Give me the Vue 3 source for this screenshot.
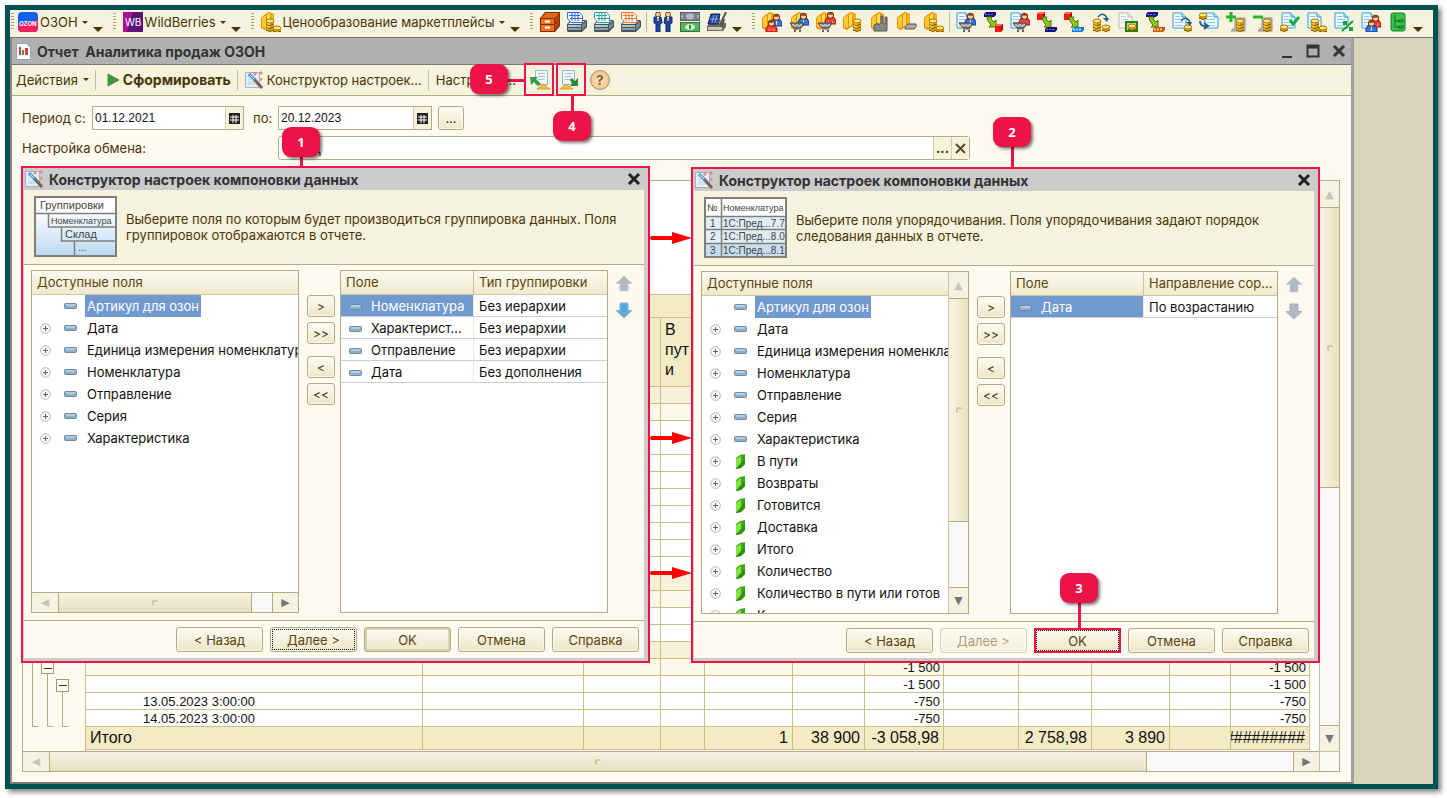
<template>
  <div class="page">
    <!-- shared icon parts -->
    <svg class="defs" width="0" height="0" aria-hidden="true">
      <symbol id="folder" viewBox="0 0 14 18" width="14" height="18" overflow="visible">
        <path d="M0 6 3 3 8 0l5 2v12l-5 1-4 3-4-2z" fill="#f09000" />
        <path d="M1 6l4-3v13l-4-1z" fill="#ffc93c" />
        <path d="M6 3l3-2v12l-3 2z" fill="#ffe04a" />
        <path d="M10 2l3 1v10l-3 1z" fill="#f7b020" />
      </symbol>
      <symbol id="coins" viewBox="0 0 8 12" width="8" height="12" overflow="visible">
        <path d="M0 2h8v10H0z" fill="#e0a800" />
        <ellipse cx="4" cy="2" rx="4" ry="2" fill="#ffe97a" stroke="#a87400" />
        <path d="M0 5q4 3 8 0M0 8q4 3 8 0M0 11q4 3 8 0" stroke="#7a5000" fill="none" />
        <path d="M1 5h3M1 8h3" stroke="#ffe97a" />
      </symbol>
      <symbol id="coins-low" viewBox="0 0 8 6" width="8" height="6" overflow="visible">
        <path d="M0 2h8v4H0z" fill="#e0a800" />
        <ellipse cx="4" cy="2" rx="4" ry="2" fill="#ffe97a" stroke="#a87400" />
        <path d="M0 5q4 3 8 0" stroke="#7a5000" fill="none" />
      </symbol>
      <symbol id="man-red" viewBox="0 0 10 11" width="11" height="12" overflow="visible">
        <path d="M0 11V8l2-3h6l2 3v3z" fill="#f4433c" stroke="#b01414" />
        <path d="M3 8v2M7 8v2" stroke="#ff9a90" />
        <circle cx="5" cy="3" r="2.800" fill="#ffcf9e" stroke="#7a3010" />
        <path d="M2 2.500q3-5 6 0z" fill="#98401a" />
      </symbol>
      <symbol id="man-blue" viewBox="0 0 10 11" width="11" height="12" overflow="visible">
        <path d="M0 11V8l2-3h6l2 3v3z" fill="#3478e8" stroke="#103c98" />
        <path d="M5 6v4" stroke="#cfe2ff" />
        <circle cx="5" cy="3" r="2.800" fill="#ffcf9e" stroke="#7a3010" />
        <path d="M2 2.500q3-5 6 0z" fill="#98401a" />
      </symbol>
      <symbol id="basket" viewBox="0 0 14 9" width="14" height="9" overflow="visible">
        <path d="M0 0h14l-3 5H4z" fill="#888" stroke="#444" />
        <path d="M3 1v2M5 2v2M7 1v2M9 2v2M11 1v2" stroke="#eee" />
        <path d="M4 6h7" stroke="#555" />
        <circle cx="5" cy="8" r="1" fill="#333" /><circle cx="10" cy="8" r="1" fill="#333" />
      </symbol>
      <symbol id="doc" viewBox="0 0 15 16" width="15" height="16" overflow="visible">
        <path d="M1 1h9l4 4v11H1z" fill="#f4fbff" stroke="#2a9be0" />
        <path d="M10 1v4h4" fill="#bfe4fa" stroke="#2a9be0" />
        <path d="M3 4.500h5M3 7.500h8M3 10.500h8M3 13.500h8" stroke="#8cc8ee" />
      </symbol>
      <symbol id="doc-grey" viewBox="0 0 15 16" width="15" height="16" overflow="visible">
        <path d="M1 1h9l4 4v11H1z" fill="#fbfbfb" stroke="#b8b8b8" />
        <path d="M10 1v4h4" fill="#e8e8e8" stroke="#b8b8b8" />
        <path d="M3 4.500h5M3 7.500h8M3 10.500h8" stroke="#d0d0d0" />
      </symbol>
      <symbol id="cube-red" viewBox="0 0 8 8" width="8" height="8" overflow="visible">
        <path d="M0 2l2-2h6v6L6 8H0z" fill="#b80808" />
        <path d="M0 2h6v6H0z" fill="#f01818" />
        <path d="M0 2l2-2h6L6 2z" fill="#ff6a5a" />
      </symbol>
      <symbol id="bar-navy" viewBox="0 0 12 5" width="12" height="5" overflow="visible">
        <path d="M0 2l2-2h10v3l-2 2H0z" fill="#14147c" /><path d="M1 2.500h9" stroke="#7a6cf0" stroke-dasharray="2 1" />
      </symbol>
      <symbol id="bar-blue" viewBox="0 0 12 5" width="12" height="5" overflow="visible">
        <path d="M0 2l2-2h10v3l-2 2H0z" fill="#1878e0" /><path d="M1 2.500h9" stroke="#a8dcff" stroke-width="2" stroke-dasharray="2 1" />
      </symbol>
      <symbol id="bar-orange" viewBox="0 0 12 5" width="12" height="5" overflow="visible">
        <path d="M0 2l2-2h10v3l-2 2H0z" fill="#c85818" /><path d="M1 2.500h9" stroke="#ffc890" stroke-width="2" stroke-dasharray="2 1" />
      </symbol>
      <symbol id="arrow" viewBox="0 0 10 10" width="10" height="10" overflow="visible">
        <path d="M0 0h5l-1 2 3 3 2-2v7H2l2-2-3-4z" fill="#8fc41c" stroke="#4a7800" />
      </symbol>
      <symbol id="printer" viewBox="0 0 20 20" width="20" height="20">
        <path d="M0 12l4-4h15l1 1v6l-5 5H1l-1-1z" fill="#4a545c" />
        <path d="M1 12l4-3h13l-4 3z" fill="#e2e8ec" />
        <path d="M1 13h13v2H1z" fill="#b8c4cc" /><path d="M1 16h13v2H1z" fill="#8c9aa4" />
        <path d="M15 13l4-3v4l-4 4z" fill="#78868f" /><path d="M10 14h3" stroke="#58e058" />
      </symbol>
      <symbol id="curve" viewBox="0 0 12 8" width="12" height="8" overflow="visible">
        <path d="M1 4q5-6 9 1" fill="none" stroke="#2a5c8c" stroke-width="1.500" />
        <path d="M6 5h6l-2 4z" fill="#2a5c8c" />
      </symbol>
      <symbol id="plate" viewBox="0 0 14 13" width="14" height="13" overflow="visible">
        <path d="M0 13l4-4V0h10v13z" fill="#b8b8b8" stroke="#909090" />
      </symbol>
      <symbol id="wand" viewBox="0 0 19 18" width="19" height="18" overflow="visible">
        <path d="M.5 1.500h14v15H.5z" fill="#e6eff7" stroke="#9db4c6" />
        <path d="M3 5h5M3 8h9M3 11h9M3 13h9" stroke="#b8cedd" />
        <path d="M9 8 17 17" stroke="#7a6048" stroke-width="3" />
        <path d="M4 3l6 6" stroke="#4a92cc" stroke-width="3" />
        <path d="M5 4l4 4" stroke="#d8ecfa" />
        <path d="M10 1v4M8 3h4M16 0v4M14 2h4M16 7v3M15 8h3" stroke="#f5766a" />
      </symbol>
      <symbol id="dash" viewBox="0 0 13 6" width="13" height="6">
        <rect x=".5" y=".5" width="12" height="5" rx="1" fill="#8db0c8" stroke="#6c8da5" />
        <path d="M2 2h9" stroke="#d6e6f0" />
      </symbol>
      <symbol id="leaf" viewBox="0 0 9 15" width="9" height="15">
        <path d="M0 4 4 1l5-1v10l-4 4-5 1z" fill="#3aa814" />
        <path d="M0 5 5 2v8l-5 4z" fill="#86e048" />
        <path d="M4 10l5-5v5l-4 4-5 1z" fill="#2c9010" />
      </symbol>
      <symbol id="plus-ball" viewBox="0 0 11 11" width="11" height="11">
        <circle cx="5.500" cy="5.500" r="4.800" fill="#fafafa" stroke="#b4b4b4" />
        <path d="M3 5.500h5M5.500 3v5" stroke="#666" />
      </symbol>
      <symbol id="up" viewBox="0 0 18 17" width="18" height="17">
        <path d="M9 1l8 7.500h-4V16H5V8.500H1z" fill="#b0bac2" stroke="#c6ced4" />
      </symbol>
      <symbol id="down" viewBox="0 0 18 17" width="18" height="17">
        <path d="M9 16l8-7.500h-4V1H5v7.500H1z" fill="currentColor" stroke="#9db0bd" />
      </symbol>
    </svg>

    <div class="frame">
      <nav class="mainbar" aria-label="Панель команд">
        <i class="grip"></i>
        <button class="menu">
          <svg width="20" height="20" viewBox="0 0 20 20">
            <rect width="20" height="20" rx="4" fill="#1262f0" />
            <path d="M0 13 20 8v8q0 4-4 4H4q-4 0-4-4z" fill="#f5205a" />
            <text x="1" y="14" font-size="6" font-weight="bold" fill="#fff">OZON</text>
          </svg>
          ОЗОН<b class="caret"></b>
        </button>
        <b class="more"></b>
        <i class="grip"></i>
        <button class="menu">
          <svg width="20" height="20" viewBox="0 0 20 20">
            <rect width="20" height="20" fill="#a8128c" /><path d="M10 0h10v20H4z" fill="#5a1478" />
            <text x="2" y="14" font-size="10" fill="#fff">WB</text>
          </svg>
          WildBerries<b class="caret"></b>
        </button>
        <b class="more"></b>
        <i class="grip"></i>
        <button class="menu">
          <svg width="20" height="20" viewBox="0 0 20 20">
            <use href="#folder" /><use href="#coins" x="5" y="7" /><use href="#coins-low" x="12" y="14" />
          </svg>
          Ценообразование маркетплейсы<b class="caret"></b>
        </button>
        <b class="more"></b>
        <i class="grip"></i>
        <div class="icons">
          <button aria-label="Архив">
            <svg width="20" height="20" viewBox="0 0 20 20">
              <path d="M0 6l5-6h15v14l-5 6H0z" fill="#8a2c00" /><path d="M1 7h13v5H1zM1 13h13v6H1z" fill="#f07020" />
              <path d="M6 1h13l-4 5H1z" fill="#e06818" /><path d="M15 7l4-5v5l-4 5zM15 13l4-5v5l-4 5z" fill="#b84808" />
              <path d="M5 9.500h5M5 15.500h5" stroke="#fff" stroke-width="2" />
            </svg>
          </button>
          <button v-for="c in papers" :key="c" aria-label="Печать">
            <svg width="20" height="20" viewBox="0 0 20 20">
              <use href="#printer" />
              <path d="M.5 .5h12l3 3v7H4l-3.500-4z" fill="#f4f9ff" :stroke="c" />
              <path d="M2 3.500h11M3 6.500h12M5 1v8M8 1v8M11 1v8" :stroke="c" />
            </svg>
          </button>
          <i class="sep"></i>
          <button aria-label="Контрагенты">
            <svg width="20" height="20" viewBox="0 0 20 20">
              <path d="M1 5h7l1 6-2 1v8H3v-8l-2-1zM12 5h7v6l-2 1v8h-4v-8l-2-1z" fill="#1a44a0" stroke="#0c2c70" />
              <circle cx="5" cy="2.500" r="2.500" fill="#ffc890" stroke="#6a3810" /><circle cx="15" cy="2.500" r="2.500" fill="#ffc890" stroke="#6a3810" />
              <path d="M5 5v4M15 5v4" stroke="#fff" stroke-width="2" /><path d="M5 6v3M15 6v3" stroke="#d02020" />
            </svg>
          </button>
          <button aria-label="Деньги">
            <svg width="20" height="20" viewBox="0 0 20 20">
              <rect x=".5" y=".5" width="19" height="8" fill="#7a828e" stroke="#5a6268" /><ellipse cx="10" cy="4.500" rx="4" ry="3" fill="#b4bac8" /><path d="M2 3v3M18 3v3" stroke="#d8dce0" />
              <rect x=".5" y="10.500" width="19" height="9" fill="#5cb060" stroke="#2a7a3a" /><ellipse cx="10" cy="15" rx="5" ry="3" fill="#d4f0d0" /><path d="M10 13v4" stroke="#3a8a3a" stroke-width="2" />
            </svg>
          </button>
          <button aria-label="Основные средства">
            <svg width="20" height="20" viewBox="0 0 20 20">
              <path d="M0 14l3-3h16v4l-3 4H0z" fill="#6a6a60" /><path d="M1 15h14v3H1z" fill="#c8c8b0" /><path d="M4 2h9l-2 10H1z" fill="#28489c" stroke="#102050" />
              <path d="M3 7h8M7 3 5 11M10 3 8 11" stroke="#88a8f0" /><path d="M13 13 19 0M10 12l3-4M17 7l-2 8" stroke="#555" stroke-width="2" />
            </svg>
          </button>
        </div>
        <b class="more"></b>
        <i class="grip"></i>
        <div class="icons">
          <template v-for="(icon, n) in toolIcons" :key="n">
            <i v-if="n === 7" class="sep"></i>
            <button :aria-label="icon.name">
              <svg width="20" height="20" viewBox="0 0 20 20">
                <template v-for="(p, k) in icon.parts" :key="k">
                  <path v-if="p.d" :d="p.d" :fill="p.fill || 'none'" :stroke="p.stroke" :stroke-width="p.w || 1" />
                  <use v-else :href="'#' + p[0]" :x="p[1]" :y="p[2]" />
                </template>
              </svg>
            </button>
          </template>
        </div>
        <b class="more"></b>
      </nav>

      <div class="desktop">
        <main class="window">
          <header class="titlebar">
            <svg width="15" height="17" viewBox="0 0 15 17">
              <path d="M.5 .5h10l4 4v12H.5z" fill="#fff" stroke="#8fa6bd" />
              <path d="M3 4h2v8H3z" fill="#e03c3c" /><path d="M6 7h2v5H6z" fill="#3ca03c" /><path d="M9 5h3v7H9z" fill="#e03c3c" />
            </svg>
            <h1>Отчет&nbsp; Аналитика продаж ОЗОН</h1>
            <button aria-label="Свернуть"><svg width="14" height="14"><path d="M2 13h10" stroke="#333" stroke-width="2" /></svg></button>
            <button aria-label="Развернуть"><svg width="14" height="14"><path d="M1.500 1.500h11v11h-11zM1 3.500h12" fill="none" stroke="#333" stroke-width="2" /></svg></button>
            <button aria-label="Закрыть"><svg width="14" height="14"><path d="M2 2l10 10M12 2 2 12" stroke="#333" stroke-width="3" /></svg></button>
          </header>

          <div class="toolbar">
            <button>Действия<b class="caret"></b></button>
            <i class="sep"></i>
            <button class="run">
              <svg width="14" height="14"><path d="M2 1l11 6-11 6z" fill="#3c9a2c" stroke="#5a8a58" /></svg>
              Сформировать
            </button>
            <i class="sep"></i>
            <button><svg width="19" height="18"><use href="#wand" /></svg>Конструктор настроек...</button>
            <i class="sep"></i>
            <button class="settings">Настройки...</button>
            <button class="tool" aria-label="Загрузить настройки">
              <svg width="20" height="20" viewBox="0 0 20 20">
                <path d="M5.500 .5h12v14h-12z" fill="#f2f8fc" stroke="#9ab4c8" /><path d="M8 3.500h7M8 6.500h7M8 9.500h7" stroke="#a8c0d0" />
                <path d="M7 19l6-5 7 5z" fill="#ecc04a" stroke="#d0a030" /><path d="M0 7h8L6 9l5 5-3 2-4-4-3 3z" fill="#3c9a40" />
              </svg>
            </button>
            <button class="tool" aria-label="Сохранить настройки">
              <svg width="20" height="20" viewBox="0 0 20 20">
                <path d="M2.500 .5h12v14h-12z" fill="#f2f8fc" stroke="#9ab4c8" /><path d="M5 3.500h7M5 6.500h7M5 9.500h7" stroke="#a8c0d0" />
                <path d="M0 19l6-5 7 5z" fill="#ecc04a" stroke="#d0a030" /><path d="M18 16h-8l2-2-2-4 2-2 3 3 3-3z" fill="#2c8a30" />
              </svg>
            </button>
            <button class="help" aria-label="Справка">?</button>
          </div>

          <form class="params" @submit.prevent>
            <div class="line">
              <label for="from">Период с:</label>
              <div class="field date from">
                <input id="from" v-model="dateFrom" />
                <button type="button" aria-label="Календарь"><svg width="11" height="11"><rect width="11" height="11" fill="#222" /><path d="M1 4h9M1 7h9M4 2v8M7 2v8" stroke="#fff" /></svg></button>
              </div>
              <label for="to">по:</label>
              <div class="field date">
                <input id="to" v-model="dateTo" />
                <button type="button" aria-label="Календарь"><svg width="11" height="11"><rect width="11" height="11" fill="#222" /><path d="M1 4h9M1 7h9M4 2v8M7 2v8" stroke="#fff" /></svg></button>
              </div>
              <button type="button" class="btn dots">...</button>
            </div>
            <div class="line">
              <label for="exchange" class="wide">Настройка обмена:</label>
              <div class="field exchange">
                <input id="exchange" v-model="exchange" />
                <button type="button">...</button>
                <button type="button" aria-label="Очистить"><svg width="11" height="11"><path d="M1 1l9 9M10 1 1 10" stroke="#5a4a1c" stroke-width="2" /></svg></button>
              </div>
            </div>
          </form>

          <section class="sheet">
            <div class="gutter">
              <svg width="62" height="66" viewBox="0 0 62 66">
                <path d="M9.500 0V65.500h6M24.500 0V65.500h6M39.500 20V65.500h6" fill="none" stroke="#b5ac85" />
                <rect x="18.500" y="1.500" width="12" height="11" fill="#fffaf0" stroke="#a69c70" /><path d="M21 7.500h8" stroke="#333" />
                <rect x="33.500" y="18.500" width="12" height="12" fill="#fffaf0" stroke="#a69c70" /><path d="M36 24.500h8" stroke="#333" />
              </svg>
            </div>
            <div class="cells">
              <table>
                <colgroup>
                  <col v-for="(w, n) in columns" :key="n" :class="w" />
                </colgroup>
                <thead>
                  <tr class="group"><th v-for="(w, n) in columns" :key="n"></th></tr>
                  <tr class="names"><th v-for="(w, n) in columns" :key="n">{{ n === 3 ? 'В пути' : '' }}</th></tr>
                </thead>
                <tbody>
                  <tr v-for="(row, r) in rows" :key="r" :class="row.tone">
                    <td v-for="(w, n) in columns" :key="n">{{ row.cells[n] }}</td>
                  </tr>
                </tbody>
                <tfoot>
                  <tr><td v-for="(w, n) in columns" :key="n"><span>{{ total[n] }}</span></td></tr>
                </tfoot>
              </table>
            </div>
            <div class="vbar">
              <button class="arr off" aria-label="Вверх">▲</button>
              <div class="thumb"><i></i></div>
              <div class="track"></div>
              <button class="arr" aria-label="Вниз">▼</button>
            </div>
            <div class="hbar">
              <button class="arr off" aria-label="Влево">◀</button>
              <div class="thumb"><i></i></div>
              <div class="track"></div>
              <button class="arr" aria-label="Вправо">▶</button>
            </div>
            <div class="corner"></div>
          </section>
        </main>
      </div>
    </div>

    <section v-for="d in dialogs" :key="d.id" class="dialog" :class="d.id" role="dialog" :aria-label="d.title">
      <header class="dlg-title">
        <svg width="19" height="18"><use href="#wand" /></svg>
        <h2>{{ d.title }}</h2>
        <button aria-label="Закрыть"><svg width="15" height="15"><path d="M2 2l10 10M12 2 2 12" stroke="#222" stroke-width="3" /></svg></button>
      </header>
      <div class="intro">
        <svg v-if="d.id === 'groups'" class="preview" width="83" height="61" viewBox="0 0 83 61">
          <defs><linearGradient id="sky" x2="0" y2="1"><stop offset=".2" stop-color="#fff" /><stop offset="1" stop-color="#bcd8f0" /></linearGradient></defs>
          <path d="M1 1h81v59H1z" fill="url(#sky)" stroke="#808078" stroke-width="2" />
          <path d="M1 17.500h81M14.500 17v14H82M27.500 31v14H82M40.500 45v15" fill="none" stroke="#808078" stroke-width="1.500" />
          <g font-size="10" fill="#444"><text x="6" y="13" font-size="11">Группировки</text><text x="17" y="28" font-size="9">Номенклатура</text><text x="31" y="42" font-size="11">Склад</text><text x="44" y="55">...</text></g>
        </svg>
        <svg v-else class="preview" width="83" height="61" viewBox="0 0 83 61">
          <path d="M1 1h81v59H1z" fill="#fff" stroke="#808078" stroke-width="2" />
          <path d="M2 20h79v39H2z" fill="#e0ecf6" /><path d="M2 46h79v13H2z" fill="#c8dcf0" />
          <path d="M1 19.500h81M1 32.500h81M1 46.500h81M17.500 1v59" stroke="#808078" stroke-width="1.500" />
          <g font-size="10" fill="#444">
            <text x="3" y="14">№</text><text x="19" y="14" font-size="9">Номенклатура</text>
            <text x="6" y="30">1</text><text x="19" y="30">1С:Пред...7.7</text>
            <text x="6" y="43">2</text><text x="19" y="43">1С:Пред...8.0</text>
            <text x="6" y="57">3</text><text x="19" y="57">1С:Пред...8.1</text>
          </g>
        </svg>
        <p>{{ d.intro }}</p>
      </div>
      <div class="body">
        <div class="available">
          <div class="head">Доступные поля</div>
          <ul>
            <li v-for="(f, n) in d.fields" :key="f">
              <svg class="knob" width="11" height="11"><use v-if="n" href="#plus-ball" /></svg>
              <svg v-if="n < 7" class="mark" width="13" height="6"><use href="#dash" /></svg>
              <svg v-else class="mark" width="13" height="15"><use href="#leaf" x="2" /></svg>
              <span :class="{ picked: n === 0 }">{{ f }}</span>
            </li>
          </ul>
          <div v-if="d.id === 'groups'" class="hbar">
            <button class="arr off" aria-label="Влево">◀</button>
            <div class="thumb"><i></i></div>
            <div class="track"></div>
            <button class="arr" aria-label="Вправо">▶</button>
          </div>
          <div v-else class="vbar">
            <button class="arr off" aria-label="Вверх">▲</button>
            <div class="thumb"><i></i></div>
            <div class="track"></div>
            <button class="arr" aria-label="Вниз">▼</button>
          </div>
        </div>
        <div class="movers">
          <button class="btn">&gt;</button>
          <button class="btn">&gt;&gt;</button>
          <button class="btn back">&lt;</button>
          <button class="btn">&lt;&lt;</button>
        </div>
        <div class="chosen">
          <table>
            <thead><tr><th>Поле</th><th>{{ d.kind }}</th></tr></thead>
            <tbody>
              <tr v-for="(c, n) in d.chosen" :key="c[0]">
                <td :class="{ picked: n === 0 }"><svg width="13" height="6"><use href="#dash" /></svg>{{ c[0] }}</td>
                <td>{{ c[1] }}</td>
              </tr>
            </tbody>
          </table>
        </div>
        <div class="order">
          <button aria-label="Выше"><svg width="18" height="17"><use href="#up" /></svg></button>
          <button aria-label="Ниже" :class="{ live: d.id === 'groups' }"><svg width="18" height="17"><use href="#down" /></svg></button>
        </div>
      </div>
      <footer>
        <button class="btn">&lt; Назад</button>
        <button class="btn next" :disabled="d.id === 'sorting'">Далее &gt;</button>
        <button class="btn ok">OK</button>
        <button class="btn">Отмена</button>
        <button class="btn">Справка</button>
      </footer>
    </section>

    <svg v-for="n in 3" :key="'a' + n" class="pointer" :class="'p' + n" width="42" height="12" viewBox="0 0 42 12">
      <path d="M2 6h22" stroke="#f00" stroke-width="4" stroke-linecap="round" /><path d="M22 0 42 6 22 12z" fill="#f00" />
    </svg>

    <div class="spot load"></div>
    <div class="spot save"></div>
    <i v-for="n in 5" :key="'s' + n" class="stem" :class="'stem' + n"></i>
    <div v-for="n in 5" :key="'c' + n" class="callout" :class="'c' + n">{{ n }}</div>
  </div>
</template>

<script setup>
import { ref } from 'vue';

const dateFrom = ref('01.12.2021');
const dateTo = ref('20.12.2023');
const exchange = ref('Склад');

const papers = ['#3c6ce8', '#2ca0a8', '#f07820'];

const check = { d: 'M10 8l3 4 6-7', stroke: '#18b040', w: 3 };
const plus = { d: 'M0 5h10M5 0v10', stroke: '#28b828', w: 3 };
const minus = { d: 'M0 5h10', stroke: '#28b828', w: 3 };

const toolIcons = [
  { name: 'Поставщики', parts: [['folder', 0, 0], ['man-blue', 9, 2], ['man-red', 4, 8]] },
  { name: 'Покупка', parts: [['folder', 2, 0], ['man-blue', 9, 1], ['basket', 1, 11]] },
  { name: 'Возврат', parts: [['folder', 0, 0], ['man-red', 9, 0], ['basket', 2, 11]] },
  { name: 'Цены', parts: [['folder', 0, 0], ['coins', 10, 7]] },
  { name: 'Производство', parts: [['folder', 1, 0], { d: 'M4 19v-6l4-2v2l3-2V4h2v8h2V5h2v14z', fill: '#888', stroke: '#555' }] },
  { name: 'Оборудование', parts: [['folder', 0, 0], { d: 'M8 15l3-3h8v3l-2 2H8z', fill: '#aaa', stroke: '#555' }] },
  { name: 'Касса', parts: [['folder', 0, 0], ['coins', 5, 7], ['coins-low', 12, 14]] },
  { name: 'Заказ', parts: [['doc', 0, 0], ['man-blue', 9, 1], ['basket', 3, 11]] },
  { name: 'Отгрузка', parts: [['bar-navy', 1, 0], ['arrow', 4, 5], ['cube-red', 12, 12]] },
  { name: 'Заказ покупателя', parts: [['doc', 0, 0], ['man-red', 9, 1], ['basket', 3, 11]] },
  { name: 'Приемка', parts: [['cube-red', 0, 0], ['arrow', 5, 5], ['bar-navy', 8, 15]] },
  { name: 'Перемещение', parts: [['cube-red', 0, 0], ['arrow', 5, 5], ['bar-blue', 8, 15]] },
  { name: 'Обмен', parts: [['coins', 2, 7], ['coins-low', 11, 13], ['curve', 6, 1]] },
  { name: 'Оплата', parts: [['doc-grey', 0, 0], { d: 'M8 10h11v9H8z', fill: '#b8e0b0', stroke: '#28801c', w: 2 }, ['coins-low', 10, 12]] },
  { name: 'Списание', parts: [['bar-navy', 1, 0], ['arrow', 4, 5], ['bar-orange', 8, 15]] },
  { name: 'Поступление', parts: [['doc', 0, 0], ['coins-low', 12, 13], ['curve', 8, 5]] },
  { name: 'Выдача', parts: [['doc', 5, 0], ['coins-low', 0, 1], { d: 'M1 9q0 6 7 5M5 11l4 3-4 3', stroke: '#2a5c8c', w: 2 }] },
  { name: 'Добавить', parts: [['plate', 5, 6], ['coins', 10, 7], plus] },
  { name: 'Удалить', parts: [['plate', 5, 6], ['coins', 10, 7], minus] },
  { name: 'Провести', parts: [['doc', 1, 0], ['coins-low', 0, 13], check] },
  { name: 'Начисление', parts: [['doc', 0, 0], ['coins', 4, 7], ['coins-low', 12, 14]] },
  { name: 'Скидки', parts: [['doc', 0, 0], { d: 'M8 19 19 9M10 10h2v2h-2zM16 16h2v2h-2z', stroke: '#18a038', w: 2 }] },
  { name: 'Сотрудники', parts: [['doc', 0, 0], ['man-red', 9, 3], ['man-blue', 5, 8]] },
  {
    name: 'Структура',
    parts: [
      { d: 'M5 1h10q2 0 2 2v14q0 2-2 2H5q-2 0-2-2V3q0-2 2-2z', fill: '#38c048', stroke: '#188028' },
      { d: 'M7 3v12h4M7 9h4M11 8h4v2h-4zM11 14h4v2h-4z', stroke: '#0c6a20' },
    ],
  },
];

const columns = ['auto', 'w161', 'w77', 'w44', 'w88', 'w72', 'w79', 'w75', 'w73', 'w78', 'w61', 'w79'];

const tones = { 0: 'beige', 1: 'pale', 11: 'beige', 12: 'pale', 15: 'beige', 16: 'pale' };
const values = {
  16: { 6: '-1 500', 11: '-1 500' },
  17: { 6: '-1 500', 11: '-1 500' },
  18: { 0: '13.05.2023 3:00:00', 6: '-750', 11: '-750' },
  19: { 0: '14.05.2023 3:00:00', 6: '-750', 11: '-750' },
};
const rows = Array.from({ length: 20 }, (_, n) => ({ tone: tones[n], cells: values[n] || {} }));

const total = {
  0: 'Итого', 4: '1', 5: '38 900', 6: '-3 058,98', 8: '2 758,98', 9: '3 890', 11: '#########',
};

const baseFields = [
  'Артикул для озон', 'Дата', 'Единица измерения номенклатуры', 'Номенклатура',
  'Отправление', 'Серия', 'Характеристика',
];

const dialogs = [
  {
    id: 'groups',
    title: 'Конструктор настроек компоновки данных',
    intro: 'Выберите поля по которым будет производиться группировка данных. Поля группировок отображаются в отчете.',
    fields: baseFields,
    kind: 'Тип группировки',
    chosen: [
      ['Номенклатура', 'Без иерархии'],
      ['Характерист…', 'Без иерархии'],
      ['Отправление', 'Без иерархии'],
      ['Дата', 'Без дополнения'],
    ],
  },
  {
    id: 'sorting',
    title: 'Конструктор настроек компоновки данных',
    intro: 'Выберите поля упорядочивания. Поля упорядочивания задают порядок следования данных в отчете.',
    fields: [
      ...baseFields, 'В пути', 'Возвраты', 'Готовится', 'Доставка', 'Итого',
      'Количество', 'Количество в пути или готов', 'К',
    ],
    kind: 'Направление сор…',
    chosen: [['Дата', 'По возрастанию']],
  },
];
</script>

<style>
body {
  background: #fff;
}
</style>

<style scoped>
* {
  box-sizing: border-box;
}

.page {
  position: relative;
  display: flex;
  min-height: 100vh;
  padding: 5px 9px 9px 5px;
  overflow: hidden;
  font-family: Inter, "Liberation Sans", sans-serif;
  font-size: 13px;
  color: #4a3408;
}

.defs {
  position: absolute;
}

button {
  font: inherit;
  color: inherit;
  padding: 0;
  border: 0;
  background: none;
}

svg {
  display: block;
  flex: none;
}

h1,
h2,
p,
ul {
  margin: 0;
  padding: 0;
}

.frame {
  flex: 1;
  min-width: 0;
  display: flex;
  flex-direction: column;
  border: 5px solid #005252;
  box-shadow: 3px 3px 5px rgba(0, 0, 0, 0.5);
}

/* main command bar */
.mainbar {
  display: flex;
  align-items: center;
  height: 28px;
  padding: 0 0 3px 1px;
  background: #f5f2dd;
  border-bottom: 1px solid #777;
  white-space: nowrap;
}

.grip {
  flex: none;
  width: 3px;
  height: 18px;
  margin: 0 4px 0 0;
  background: repeating-linear-gradient(#a89e78 0 1px, transparent 1px 3px);
}

.more + .grip {
  margin: 0 7px 0 10px;
}

.menu {
  display: flex;
  align-items: center;
  gap: 2px;
}

.caret {
  display: inline-block;
  margin-left: 2px;
  border: 3px solid transparent;
  border-top-color: #4a3408;
  border-bottom: 0;
  vertical-align: middle;
}

.more {
  flex: none;
  align-self: flex-end;
  margin: 0 0 2px 5px;
  border: 5px solid transparent;
  border-top-color: #4a3408;
  border-bottom: 0;
}

.icons {
  display: flex;
  align-items: center;
  gap: 7px;
}

.sep {
  flex: none;
  width: 1px;
  height: 20px;
  background: #c4bc98;
}

.icons .sep {
  margin: 0 -1px 0 -2px;
}

/* report window */
.desktop {
  flex: 1;
  display: flex;
  padding-right: 79px;
  background: #d9d3bc;
}

.window {
  flex: 1;
  min-width: 0;
  display: flex;
  flex-direction: column;
  border: 1px solid #777;
  border-width: 0 3px 2px 2px;
  border-color: #777 #a0a0a0 #777 #8a8a8a;
  background: #fffaf0;
}

.titlebar {
  display: flex;
  align-items: center;
  gap: 12px;
  height: 27px;
  padding: 0 5px 0 4px;
  background: #b0b0b0;
  border-bottom: 1px solid #777;
  color: #333;
}

.titlebar h1 {
  flex: 1;
  margin-left: -6px;
  font-size: 14px;
  font-weight: 700;
}

.toolbar {
  display: flex;
  align-items: center;
  height: 31px;
  padding: 0 4px 1px;
  background: #f5f2dd;
  border-bottom: 1px solid #b5ac85;
  white-space: nowrap;
}

.toolbar button {
  display: flex;
  align-items: center;
  gap: 3px;
}

.toolbar .sep {
  margin: 0 7px 0 6px;
}

.toolbar .run {
  padding-left: 3px;
  font-size: 14px;
  font-weight: 700;
}

.toolbar .settings {
  width: 90px;
}

.toolbar .tool {
  width: 30px;
  padding-left: 4px;
}

.toolbar .help {
  justify-content: center;
  width: 20px;
  height: 20px;
  margin-left: 4px;
  border: 1px solid #a89078;
  border-radius: 50%;
  background: radial-gradient(#ffe4bc, #f0b878);
  font-weight: 700;
  color: #70604c;
}

/* parameters */
.params {
  display: flex;
  flex-direction: column;
  gap: 6px;
  padding: 10px 10px 20px;
}

.line {
  display: flex;
  align-items: center;
  height: 24px;
}

.line label {
  width: 70px;
}

.line .from + label {
  width: 34px;
  padding-left: 9px;
}

.line .wide {
  width: 256px;
}

.field {
  display: flex;
  height: 24px;
  border: 1px solid #b5ac85;
  background: #fff;
}

.field input {
  flex: 1;
  min-width: 0;
  padding: 0 2px;
  border: 0;
  outline: 0;
  background: none;
  font: 12px "Liberation Sans", sans-serif;
  color: #111;
}

.field button {
  display: grid;
  place-items: center;
  width: 18px;
  border-left: 1px solid #d4ccac;
  background: #f5f2dd;
  font-weight: 700;
}

.date {
  width: 154px;
}

.line .from {
  width: 152px;
}

.exchange {
  width: 692px;
  border-radius: 3px;
}

.exchange input {
  padding: 0 4px;
  font-size: 13px;
}

.btn {
  border: 1px solid #b5ac85;
  border-radius: 3px;
  background: linear-gradient(#fdfcf4, #ece6c8);
  box-shadow: inset 0 0 0 1px #faf7e6;
}

.dots {
  width: 26px;
  height: 24px;
  margin-left: 6px;
}

/* report sheet */
.sheet {
  flex: 1;
  display: grid;
  grid-template-columns: 62px minmax(0, 1fr) 20px;
  grid-template-rows: 1fr 20px;
  margin: 0 11px 10px 10px;
  border: 1px solid #b5ac85;
  background: #fff;
}

.gutter {
  display: flex;
  align-items: flex-end;
  padding-bottom: 24px;
  background: #fffaf0;
}

.cells {
  display: flex;
  align-items: flex-end;
  padding: 0 9px 1px 0;
  border-left: 1px solid #c9bf84;
  font-family: "Liberation Sans", sans-serif;
  color: #111;
}

.cells table {
  width: 100%;
  table-layout: fixed;
  border-collapse: separate;
  border-spacing: 0;
}

.w44 { width: 44px; }
.w61 { width: 61px; }
.w72 { width: 72px; }
.w73 { width: 73px; }
.w75 { width: 75px; }
.w77 { width: 77px; }
.w78 { width: 78px; }
.w79 { width: 79px; }
.w88 { width: 88px; }
.w161 { width: 161px; }

.cells th,
.cells td {
  padding: 0 3px;
  border-right: 1px solid #c9bf84;
  border-bottom: 1px solid #c9bf84;
  text-align: right;
  white-space: nowrap;
}

.group th {
  height: 24px;
  border-top: 1px solid #c9bf84;
  background: #f3ebc4;
}

.cells .group th {
  border-right: 0;
}

.cells .names th {
  height: 69px;
  padding: 2px 10px 2px 4px;
  background: #f3ebc4;
  font-size: 16px;
  font-weight: 400;
  line-height: 20px;
  text-align: left;
  vertical-align: top;
  white-space: normal;
  overflow-wrap: anywhere;
}

tbody td {
  font-size: 13px;
}

.cells tbody td {
  height: 17px;
  padding-top: 1px;
  line-height: 15px;
}

.cells tbody td:first-child {
  padding-left: 57px;
  text-align: left;
}

.beige td {
  background: #f8f1d8;
}

.pale td {
  background: #fbf8ea;
}

.cells tfoot td {
  height: 23px;
  padding: 0 4px;
  overflow: hidden;
  background: #f3ebc4;
  font-size: 16px;
  line-height: 22px;
}

.cells tfoot td:first-child {
  text-align: left;
}

.cells tfoot span {
  display: flex;
  justify-content: flex-end;
}

.cells tfoot td:first-child span {
  justify-content: flex-start;
}

/* scroll bars */
.vbar,
.hbar {
  display: flex;
  background: #f8f8f6;
}

.vbar {
  flex-direction: column;
  border-left: 1px solid #c9c19c;
}

.hbar {
  border-top: 1px solid #b5ac85;
}

.arr {
  flex: none;
  width: 26px;
  background: #f5f2e2;
  font: 11px "DejaVu Sans", sans-serif;
  color: #777;
}

.arr.off {
  color: #c8c4b4;
}

.vbar .arr {
  width: auto;
  height: 26px;
}

.thumb {
  display: grid;
  place-items: center;
  border: 1px solid #b5ac85;
}

.thumb i {
  width: 6px;
  height: 6px;
  border: 2px solid #cfc7a6;
  border-width: 2px 0 0 2px;
  border-radius: 2px;
}

.hbar .thumb {
  border-width: 0 1px;
  background: linear-gradient(#f6f3e0, #e6dfc0);
}

.vbar .thumb {
  border-width: 1px 0;
  background: linear-gradient(90deg, #f8f5e4, #e8e1bc);
}

.sheet .vbar .thumb {
  flex: 281;
}

.sheet .vbar .track {
  flex: 238;
}

.sheet .hbar {
  grid-column: 1 / 3;
}

.sheet .hbar .thumb {
  flex: 1099;
}

.sheet .hbar .track {
  flex: 146;
}

.track + .arr {
  border-left: 1px solid #b5ac85;
}

.vbar .track + .arr {
  border-left: 0;
  border-top: 1px solid #b5ac85;
}

.corner {
  border: 1px solid #c9c19c;
  border-width: 1px 0 0 1px;
  background: #f8f8f4;
}

/* wizard windows */
.dialog {
  position: absolute;
  display: flex;
  flex-direction: column;
  width: 629px;
  border: 2px solid #ec1447;
  background: #fffaf0;
  box-shadow: inset -4px -3px 0 #cbcbcb, inset 1px 0 0 #cbcbcb;
}

.groups {
  left: 21px;
  top: 166px;
}

.sorting {
  left: 691px;
  top: 167px;
}

.dlg-title {
  display: flex;
  align-items: center;
  height: 22px;
  gap: 5px;
  padding: 0 6px 0 2px;
  background: #cbcbcb;
  color: #333;
}

.dlg-title h2 {
  flex: 1;
  font-size: 14px;
  font-weight: 700;
}

.intro {
  display: flex;
  align-items: center;
  gap: 9px;
  height: 75px;
  margin: 0 4px 0 1px;
  padding: 0 10px;
  border-bottom: 1px solid #b5ac85;
  background: #f5f2dd;
  line-height: 16px;
}

.preview {
  align-self: flex-start;
  margin-top: 6px;
  font-family: "Liberation Sans Narrow", "Liberation Sans", sans-serif;
}

.body {
  display: flex;
  padding: 5px 12px 7px 8px;
}

.available {
  display: flex;
  flex-direction: column;
  width: 268px;
  height: 343px;
  border: 1px solid #b5ac85;
  background: #fff;
  color: #111;
}

.head,
.chosen th {
  height: 24px;
  padding: 0 5px;
  border-bottom: 1px solid #d0c8a4;
  background: linear-gradient(#fbfaf0, #f0eacc);
  font-weight: 400;
  line-height: 23px;
  text-align: left;
  color: #5e430e;
}

.available ul {
  flex: 1;
  min-height: 0;
  overflow: hidden;
  list-style: none;
}

.available li {
  display: flex;
  align-items: center;
  height: 22px;
  padding-left: 8px;
  white-space: nowrap;
}

.knob {
  margin-right: 13px;
}

.mark {
  margin-right: 8px;
}

.available li span {
  padding: 0 2px;
  line-height: 22px;
}

.available .picked,
.chosen .picked {
  background: #6f99cf;
  color: #fff;
}

.available .hbar {
  height: 20px;
}

.available .hbar .thumb {
  flex: 195;
}

.available .hbar .track {
  flex: 20;
}

.sorting .available {
  display: grid;
  grid-template-columns: minmax(0, 1fr) 20px;
  grid-template-rows: 24px minmax(0, 1fr);
}

.sorting .available ul {
  grid-row: 2;
}

.sorting .available .vbar {
  grid-area: 1 / 2 / 3 / 3;
}

.available .vbar .thumb {
  flex: 224;
}

.available .vbar .track {
  flex: 65;
}

.movers {
  display: flex;
  flex-direction: column;
  gap: 5px;
  margin: 25px 5px 0 8px;
  font-size: 12px;
}

.movers .btn {
  width: 28px;
  height: 22px;
}

.movers .back {
  margin-top: 7px;
}

.chosen {
  width: 268px;
  border: 1px solid #b5ac85;
  background: #fff;
  color: #111;
}

.chosen table {
  width: 100%;
  table-layout: fixed;
  border-collapse: separate;
  border-spacing: 0;
}

.chosen th:first-child {
  width: 132px;
}

.chosen th + th {
  border-left: 1px solid #c9c19c;
}

.chosen th,
.chosen td {
  white-space: nowrap;
}

.chosen td {
  height: 22px;
  padding: 0 5px;
  border-bottom: 1px solid #c6ced8;
  line-height: 20px;
}

.chosen td + td {
  border-left: 1px solid #e6e9ee;
}

.chosen td svg {
  display: inline-block;
  margin: 0 9px 0 3px;
  vertical-align: 1px;
}

.order {
  display: flex;
  flex-direction: column;
  gap: 10px;
  margin: 5px 0 0 7px;
  color: #b0bac2;
}

.order .live {
  color: #58a8e4;
}

.dialog footer {
  display: flex;
  justify-content: flex-end;
  gap: 7px;
  margin: 0 4px 3px 1px;
  padding: 6px 5px;
  border-top: 1px solid #b5ac85;
}

.dialog footer .btn {
  width: 87px;
  height: 25px;
  color: #5e430e;
}

.sorting footer {
  margin-bottom: 2px;
}

.groups .next {
  outline: 1px dotted #111;
  outline-offset: -3px;
}

.groups .ok {
  box-shadow: inset 0 0 0 2px #d9d1ac;
}

.sorting .next {
  opacity: 0.5;
}

.dialog.sorting .ok {
  border: 2px solid #ec1447;
  border-radius: 0;
  outline: 1px dotted #111;
  outline-offset: -3px;
}

/* annotations */
.pointer,
.spot,
.stem,
.callout {
  position: absolute;
}

.pointer {
  left: 650px;
}

.p1 { top: 232px; }
.p2 { top: 432px; }
.p3 { top: 567px; }

.spot {
  top: 63px;
  width: 30px;
  height: 33px;
  border: 2px solid #ec1447;
}

.load { left: 524px; }
.save { left: 556px; }

.stem {
  width: 3px;
  background: #ec1447;
}

.stem1 { left: 300px; top: 150px; height: 17px; }
.stem2 { left: 1011px; top: 140px; height: 28px; }
.stem3 { left: 1078px; top: 600px; height: 29px; }
.stem4 { left: 571px; top: 95px; height: 18px; }
.stem5 { left: 506px; top: 79px; width: 18px; height: 3px; }

.callout {
  width: 38px;
  height: 30px;
  border-radius: 9px;
  background: #ec1447;
  box-shadow: 2px 2px 3px rgba(0, 0, 0, 0.5);
  color: #fff;
  font-family: "Open Sans", sans-serif;
  font-weight: 700;
  line-height: 30px;
  text-align: center;
}

.c1 { left: 282px; top: 127px; }
.c2 { left: 993px; top: 117px; }
.c3 { left: 1060px; top: 573px; }
.c4 { left: 553px; top: 111px; }
.c5 { left: 470px; top: 64px; }
</style>
